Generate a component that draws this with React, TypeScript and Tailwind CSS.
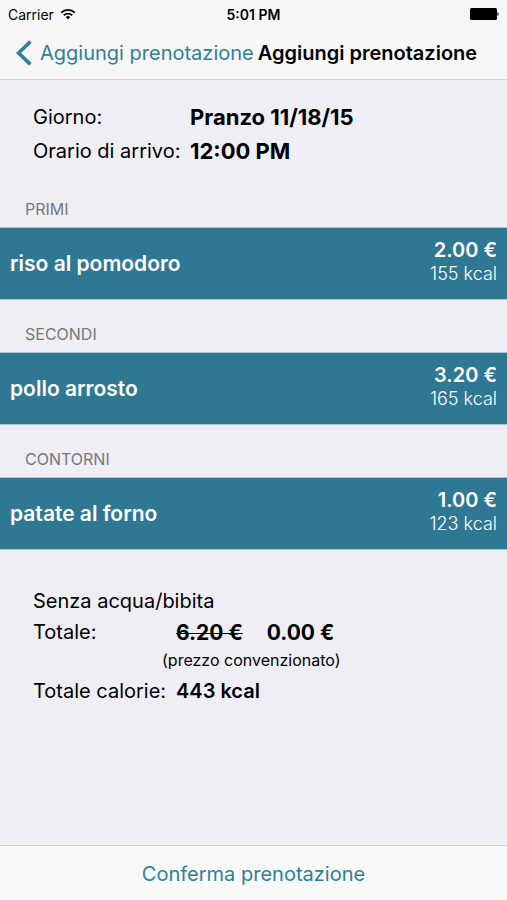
type Dish = { name: string; price: string; kcal: string };
type Course = { title: string; dishes: Dish[] };

const courses: Course[] = [
  { title: "PRIMI", dishes: [{ name: "riso al pomodoro", price: "2.00 €", kcal: "155 kcal" }] },
  { title: "SECONDI", dishes: [{ name: "pollo arrosto", price: "3.20 €", kcal: "165 kcal" }] },
  { title: "CONTORNI", dishes: [{ name: "patate al forno", price: "1.00 €", kcal: "123 kcal" }] },
];

function StatusBar() {
  return (
    <div className="grid h-7 grid-cols-3 items-center px-2 text-[14px] text-black">
      <div className="flex items-center gap-1.5">
        <span>Carrier</span>
        <svg viewBox="0 0 16 12" className="h-3 w-4" fill="none" stroke="currentColor" strokeWidth="1.8" aria-hidden="true">
          <path d="M1.2 4.6a9.7 9.7 0 0 1 13.6 0" />
          <path d="M3.8 7.4a6 6 0 0 1 8.4 0" />
          <path d="M5.7 9.1a3.4 3.4 0 0 1 4.6 0L8 11.5z" fill="currentColor" stroke="none" />
        </svg>
      </div>
      <div className="text-center font-semibold whitespace-nowrap">5:01 PM</div>
      <div className="flex justify-end">
        <svg viewBox="0 0 30 12" className="h-3 w-[30px]" fill="#000" aria-hidden="true">
          <rect x="1" y="0" width="27" height="12" rx="1.5" />
          <path d="M28.5 4.2c1.6.3 1.6 3.3 0 3.6z" />
        </svg>
      </div>
    </div>
  );
}

function CourseSection({ course }: { course: Course }) {
  return (
    <section>
      <h2 className="flex h-[52px] items-end px-[25px] pb-2 text-[16px] leading-5 text-[#77777c]">{course.title}</h2>
      <ul>
        {course.dishes.map((dish) => (
          <li
            key={dish.name}
            className="flex h-[73px] items-center justify-between border-y border-[#a9c8d6] bg-[#2e7894] px-[10px] text-white"
          >
            <span className="text-[21px] font-semibold">{dish.name}</span>
            <div className="flex flex-col items-end pb-1">
              <span className="text-[20px] leading-6 font-semibold">{dish.price}</span>
              <span className="text-[18px] leading-6 font-light">{dish.kcal}</span>
            </div>
          </li>
        ))}
      </ul>
    </section>
  );
}

export default function App() {
  return (
    <div className="flex min-h-screen flex-col bg-[#efeef4] font-['Inter',sans-serif] text-black">
      <header className="border-b border-[#d2d2d6] bg-[#f7f7f8]">
        <StatusBar />
        <nav className="flex h-[51px] items-center gap-1 px-4 pb-0.5 whitespace-nowrap">
          <button type="button" className="flex items-center gap-2 text-[20px] text-[#2e7f9b]">
            <svg viewBox="0 0 16 26" className="h-[26px] w-4" fill="none" stroke="currentColor" strokeWidth="3.6" aria-hidden="true">
              <path d="M14.4 1.6 2.6 13l11.8 11.4" />
            </svg>
            Aggiungi prenotazione
          </button>
          <h1 className="text-[20px] font-semibold">Aggiungi prenotazione</h1>
        </nav>
      </header>

      <main className="flex-1">
        <dl className="grid grid-cols-[157px_1fr] px-[33px] pt-5 pb-[7px] text-[20px] leading-[34px] whitespace-nowrap">
          <dt>Giorno:</dt>
          <dd className="text-[22px] font-bold">Pranzo 11/18/15</dd>
          <dt>Orario di arrivo:</dt>
          <dd className="text-[22px] font-bold">12:00 PM</dd>
        </dl>

        {courses.map((course) => (
          <CourseSection key={course.title} course={course} />
        ))}

        <div className="px-[33px] pt-9 text-[20px] leading-[31px] whitespace-nowrap">
          <p>Senza acqua/bibita</p>
          <dl className="grid grid-cols-[143px_1fr]">
            <dt>Totale:</dt>
            <dd className="flex gap-6 text-[21px] font-bold">
              <s className="decoration-1">6.20 €</s>
              <span>0.00 €</span>
            </dd>
            <dd className="col-span-2 pl-[129px] text-[16px] leading-6">(prezzo convenzionato)</dd>
            <dt className="pt-1">Totale calorie:</dt>
            <dd className="pt-1 font-semibold">443 kcal</dd>
          </dl>
        </div>
      </main>

      <footer className="flex h-[55px] border-t border-[#d2d2d2] bg-[#f9f9f9]">
        <button type="button" className="flex-1 pt-0.5 text-[20px] text-[#2e7f9b]">
          Conferma prenotazione
        </button>
      </footer>
    </div>
  );
}
